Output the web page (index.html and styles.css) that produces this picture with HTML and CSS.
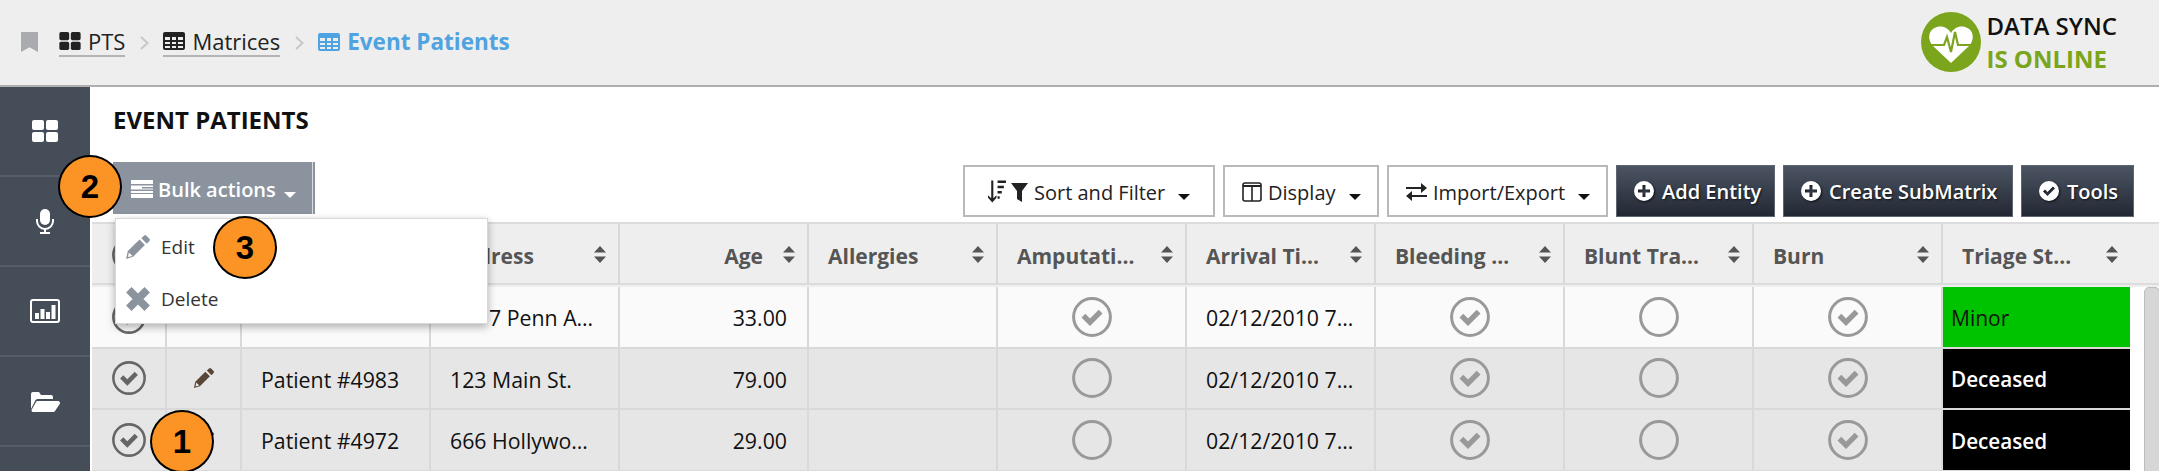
FILE: index.html
```html
<!DOCTYPE html>
<html lang="en">
<head>
<meta charset="utf-8">
<title>Event Patients</title>
<link rel="stylesheet" href="styles.css">
</head>
<body>
<svg class="defs" width="0" height="0" aria-hidden="true">
  <symbol id="i-grid" viewBox="0 0 26 22"><rect x="0" y="0" width="12" height="10" rx="2"/><rect x="14" y="0" width="12" height="10" rx="2"/><rect x="0" y="12" width="12" height="10" rx="2"/><rect x="14" y="12" width="12" height="10" rx="2"/></symbol>
  <symbol id="i-table" viewBox="0 0 22 18"><path fill-rule="evenodd" d="M2 0h18a2 2 0 0 1 2 2v14a2 2 0 0 1-2 2H2a2 2 0 0 1-2-2V2a2 2 0 0 1 2-2zM2 5v3h5V5zm7 0v3h4V5zm6 0v3h5V5zM2 10v2h5v-2zm7 0v2h4v-2zm6 0v2h5v-2zM2 14v2h5v-2zm7 0v2h4v-2zm6 0v2h5v-2z"/></symbol>
  <symbol id="i-pencil" viewBox="0 0 24 24"><path d="M17.500 1.500a1.600 1.600 0 0 1 2.200 0l2.800 2.800a1.600 1.600 0 0 1 0 2.200l-2.400 2.400-5-5zM13.400 5.100l5 5L7.500 21 1 23l1.500-7zM3.600 17l-.9 4.200 4.200-.9z"/></symbol>
  <symbol id="i-check" viewBox="0 0 40 40"><circle cx="20" cy="20" r="18.400" fill="none" stroke="currentColor" stroke-width="3"/><path d="M9.500 20.500l3.800-3.800 4.700 4.700 8.700-8.700 3.800 3.800L18 29z" fill="currentColor"/></symbol>
  <symbol id="i-empty" viewBox="0 0 40 40"><circle cx="20" cy="20" r="18.400" fill="none" stroke="currentColor" stroke-width="3"/></symbol>
  <symbol id="i-sort" viewBox="0 0 12 17"><path d="M6 0l6 6.500H0zM6 17l-6-6.500h12z"/></symbol>
  <symbol id="i-plus" viewBox="0 0 20 20"><path fill-rule="evenodd" d="M10 0a10 10 0 1 1 0 20 10 10 0 0 1 0-20zM8.500 4v4.500H4v3h4.500V16h3v-4.500H16v-3h-4.500V4z"/></symbol>
  <symbol id="i-ok" viewBox="0 0 20 20"><path fill-rule="evenodd" d="M10 0a10 10 0 1 1 0 20 10 10 0 0 1 0-20zM4 10.500l4.500 4.500L16 7.500 14 5.500l-5.500 5.500L6 8.500z"/></symbol>
</svg>

<header class="topbar">
  <nav class="crumbs">
    <svg class="bookmark" viewBox="0 0 18 21"><path d="M0 0h18v21l-9-5-9 5z"/></svg>
    <a class="crumb"><svg class="crumb-icon"><use href="#i-grid"/></svg>PTS</a>
    <svg class="chev" viewBox="0 0 9 14"><path d="M1 1l6.500 6L1 13" fill="none" stroke="currentColor" stroke-width="2"/></svg>
    <a class="crumb"><svg class="crumb-icon"><use href="#i-table"/></svg>Matrices</a>
    <svg class="chev" viewBox="0 0 9 14"><path d="M1 1l6.500 6L1 13" fill="none" stroke="currentColor" stroke-width="2"/></svg>
    <span class="crumb-now"><svg class="crumb-icon"><use href="#i-table"/></svg>Event Patients</span>
  </nav>
  <div class="sync">
    <svg class="sync-logo" viewBox="0 0 60 60">
      <circle cx="30" cy="30" r="30" fill="#7aa51c"/>
      <path d="M30 51L12 34C6 28 7 17 16 15c6-1.500 11 1 14 6 3-5 8-7.500 14-6 9 2 10 13 4 19z" fill="#fff"/>
      <path d="M8 33h15l3-8 4 15 4-20 3 13h15" fill="none" stroke="#7aa51c" stroke-width="2.200"/>
    </svg>
    <div class="sync-text"><div class="sync-a">DATA SYNC</div><div class="sync-b">IS ONLINE</div></div>
  </div>
</header>

<div class="body-row">
  <aside class="side">
    <div class="side-item"><svg class="si-grid"><use href="#i-grid"/></svg></div>
    <div class="side-item">
      <svg class="si-mic" viewBox="0 0 18 25"><rect x="4" y="0" width="10" height="16" rx="5"/><path d="M1 10v2a8 8 0 0 0 16 0v-2" fill="none" stroke="#fff" stroke-width="2"/><path d="M8 20h2v3h4v2H4v-2h4z"/></svg>
    </div>
    <div class="side-item">
      <svg class="si-chart" viewBox="0 0 30 24"><rect x="1" y="1" width="28" height="22" rx="2" fill="none" stroke="#fff" stroke-width="2"/><path d="M5 14h4v6H5zM10.500 10h4v10h-4zM16 13h4v7h-4zM21.500 6h4v14h-4z"/></svg>
    </div>
    <div class="side-item">
      <svg class="si-folder" viewBox="0 0 29 21"><path d="M0 18V3a2 2 0 0 1 2-2h6l2 3h10a2 2 0 0 1 2 2v2H7a3 3 0 0 0-3 2z"/><path d="M6 10h21a2 2 0 0 1 1.700 3L24 20a2 2 0 0 1-1.500 1H2a1.500 1.500 0 0 1-1.300-2.300L5 11a2 2 0 0 1 1-1z"/></svg>
    </div>
  </aside>

  <main class="content">
    <h1 class="title">EVENT PATIENTS</h1>
    <div class="toolbar">
      <button class="bulk"><svg class="bulk-icon" viewBox="0 0 22 18"><path d="M0 0h22v4H0zM0 5.500h22V7H11v1.500h11v1H0zM0 11h22v2H0zM0 14h22v4H0z"/></svg>Bulk actions<i class="caret"></i></button>
      <div class="actions">
        <button class="btn btn-sort">
          <svg class="ic-sort" viewBox="0 0 18 22"><path d="M4 0h2v17l3-3v2.500L5 21l-4-4.500V14l3 3z"/><path d="M10 0h8v2.500h-8zM10 5h6v2.500h-6zM10 10h4v2.500h-4zM10 15h2v2.500h-2z"/></svg>
          <svg class="ic-filter" viewBox="0 0 17 19"><path d="M0 0h17l-6 8v11l-5-3V8z"/></svg>
          Sort and Filter<i class="caret dark"></i></button>
        <button class="btn btn-disp">
          <svg class="ic-cols" viewBox="0 0 20 20"><rect x="1" y="1" width="18" height="18" rx="2" fill="none" stroke="#222" stroke-width="1.600"/><path d="M1 3h18v2H1zM9.200 3h1.600v16H9.200z"/></svg>
          Display<i class="caret dark"></i></button>
        <button class="btn btn-imp">
          <svg class="ic-swap" viewBox="0 0 21 18"><path d="M0 4h15V0l6 5-6 5V6H0z"/><path d="M21 12H6V8l-6 5 6 5v-4h15z"/></svg>
          Import/Export<i class="caret dark"></i></button>
        <button class="btn-dark btn-add"><svg class="dk-icon"><use href="#i-plus"/></svg>Add Entity</button>
        <button class="btn-dark btn-sub"><svg class="dk-icon"><use href="#i-plus"/></svg>Create SubMatrix</button>
        <button class="btn-dark btn-tools"><svg class="dk-icon"><use href="#i-ok"/></svg>Tools</button>
      </div>
    </div>

    <div class="grid">
      <div class="row head">
        <div class="cell"><svg class="chk-s"><use href="#i-check"/></svg></div>
        <div class="cell"></div>
        <div class="cell th"><span class="lab">Name</span><svg class="sort"><use href="#i-sort"/></svg></div>
        <div class="cell th"><span class="lab">Address</span><svg class="sort"><use href="#i-sort"/></svg></div>
        <div class="cell th"><span class="lab right">Age</span><svg class="sort"><use href="#i-sort"/></svg></div>
        <div class="cell th"><span class="lab">Allergies</span><svg class="sort"><use href="#i-sort"/></svg></div>
        <div class="cell th"><span class="lab">Amputati…</span><svg class="sort"><use href="#i-sort"/></svg></div>
        <div class="cell th"><span class="lab">Arrival Ti…</span><svg class="sort"><use href="#i-sort"/></svg></div>
        <div class="cell th"><span class="lab">Bleeding …</span><svg class="sort"><use href="#i-sort"/></svg></div>
        <div class="cell th"><span class="lab">Blunt Tra…</span><svg class="sort"><use href="#i-sort"/></svg></div>
        <div class="cell th"><span class="lab">Burn</span><svg class="sort"><use href="#i-sort"/></svg></div>
        <div class="cell th"><span class="lab">Triage St…</span><svg class="sort"><use href="#i-sort"/></svg></div>
      </div>

      <div class="row light">
        <div class="cell ctr"><svg class="chk-s"><use href="#i-check"/></svg></div>
        <div class="cell ctr"></div>
        <div class="cell td"></div>
        <div class="cell td td-covered">7 Penn A…</div>
        <div class="cell td num">33.00</div>
        <div class="cell td"></div>
        <div class="cell ctr"><svg class="chk"><use href="#i-check"/></svg></div>
        <div class="cell td">02/12/2010 7…</div>
        <div class="cell ctr"><svg class="chk"><use href="#i-check"/></svg></div>
        <div class="cell ctr"><svg class="chk"><use href="#i-empty"/></svg></div>
        <div class="cell ctr"><svg class="chk"><use href="#i-check"/></svg></div>
        <div class="cell status minor">Minor</div>
      </div>

      <div class="row">
        <div class="cell ctr"><svg class="chk-s"><use href="#i-check"/></svg></div>
        <div class="cell ctr"><svg class="pen"><use href="#i-pencil"/></svg></div>
        <div class="cell td">Patient #4983</div>
        <div class="cell td">123 Main St.</div>
        <div class="cell td num">79.00</div>
        <div class="cell td"></div>
        <div class="cell ctr"><svg class="chk"><use href="#i-empty"/></svg></div>
        <div class="cell td">02/12/2010 7…</div>
        <div class="cell ctr"><svg class="chk"><use href="#i-check"/></svg></div>
        <div class="cell ctr"><svg class="chk"><use href="#i-empty"/></svg></div>
        <div class="cell ctr"><svg class="chk"><use href="#i-check"/></svg></div>
        <div class="cell status dead">Deceased</div>
      </div>

      <div class="row">
        <div class="cell ctr"><svg class="chk-s"><use href="#i-check"/></svg></div>
        <div class="cell ctr"><svg class="pen"><use href="#i-pencil"/></svg></div>
        <div class="cell td">Patient #4972</div>
        <div class="cell td">666 Hollywo…</div>
        <div class="cell td num">29.00</div>
        <div class="cell td"></div>
        <div class="cell ctr"><svg class="chk"><use href="#i-empty"/></svg></div>
        <div class="cell td">02/12/2010 7…</div>
        <div class="cell ctr"><svg class="chk"><use href="#i-check"/></svg></div>
        <div class="cell ctr"><svg class="chk"><use href="#i-empty"/></svg></div>
        <div class="cell ctr"><svg class="chk"><use href="#i-check"/></svg></div>
        <div class="cell status dead">Deceased</div>
      </div>
      <div class="thumb"></div>
    </div>
  </main>
</div>

<div class="menu">
  <div class="menu-item"><svg class="menu-icon"><use href="#i-pencil"/></svg>Edit</div>
  <div class="menu-item"><svg class="menu-icon" viewBox="0 0 24 24"><path d="M6 1l6 6 6-6 5 5-6 6 6 6-5 5-6-6-6 6-5-5 6-6-6-6z"/></svg>Delete</div>
</div>

<div class="badge b1">1</div>
<div class="badge b2">2</div>
<div class="badge b3">3</div>
</body>
</html>
```

FILE: styles.css
```css
* { box-sizing: border-box; }
html, body { margin: 0; padding: 0; }
body {
  width: 2159px;
  height: 471px;
  overflow: hidden;
  position: relative;
  background: #fff;
  font-family: "Open Sans", "Noto Sans", sans-serif;
  color: #111;
}
.defs { position: absolute; }

/* top bar */
.topbar {
  height: 87px;
  background: #eeeeee;
  border-bottom: 2px solid #aeaeae;
  display: flex;
  justify-content: space-between;
  align-items: flex-start;
  padding: 0 25px 0 21px;
}
.crumbs {
  display: flex;
  align-items: flex-start;
  padding-top: 26px;
  font-size: 22px;
  line-height: 30px;
}
.bookmark { width: 17px; height: 20px; margin: 6px 21px 0 0; fill: #a9abae; }
.crumb {
  display: flex;
  align-items: center;
  color: #222;
  border-bottom: 2px solid #b4b4b4;
  height: 31px;
}
.crumb-icon { width: 22px; height: 18px; margin-right: 7px; fill: currentColor; }
.chev { width: 9px; height: 14px; margin: 10px 14px 0 15px; color: #c8c8c8; }
.crumb-now {
  display: flex;
  align-items: center;
  height: 31px;
  color: #4fa3e0;
  font-size: 22.500px;
  font-weight: 700;
}
.sync { display: flex; margin-top: 12px; margin-right: 17px; }
.sync-logo { width: 60px; height: 60px; margin-right: 5px; }
.sync-text { font-size: 24px; line-height: 33px; font-weight: 600; margin-top: -3px; }
.sync-a { color: #111; }
.sync-b { color: #7aa51c; font-weight: 700; }

/* body */
.body-row { display: flex; height: 384px; }
.side { width: 90px; background: #454d59; flex: none; display: flex; flex-direction: column; }
.side-item {
  height: 90px;
  flex: none;
  display: flex;
  align-items: center;
  justify-content: center;
  border-bottom: 2px solid #555d68;
  fill: #fff;
}
.si-grid { width: 26px; height: 22px; }
.si-mic { width: 18px; height: 25px; }
.si-chart { width: 30px; height: 24px; }
.si-folder { width: 29px; height: 21px; }

.content { flex: 1; min-width: 0; position: relative; }
.title {
  margin: 0;
  height: 75px;
  padding: 18px 0 0 23px;
  font-size: 24px;
  line-height: 30px;
  font-weight: 700;
  color: #111;
}

/* toolbar */
.toolbar { height: 60px; display: flex; justify-content: space-between; padding: 0 25px 0 23px; }
button { font: inherit; cursor: pointer; }
.bulk {
  width: 202px;
  height: 52px;
  display: flex;
  align-items: center;
  padding: 2px 0 0 18px;
  background: #8a939e;
  border: 0;
  box-shadow: inset -2px 0 0 #8a939e, inset -3px 0 0 #d9dde1;
  color: #fff;
  font-size: 20px;
  font-weight: 600;
}
.bulk-icon { width: 22px; height: 18px; margin-right: 5px; fill: #fff; }
.caret {
  display: inline-block;
  width: 0;
  height: 0;
  margin: 12px 0 0 8px;
  border-left: 6.500px solid transparent;
  border-right: 6.500px solid transparent;
  border-top: 6.500px solid #fff;
}
.caret.dark { border-top-color: #111; margin: 10px 0 0 13px; }
.actions { display: flex; gap: 8px; margin-top: 3px; height: 52px; }
.btn {
  height: 52px;
  display: flex;
  align-items: center;
  padding: 2px 0 0;
  background: #fff;
  border: 2px solid #b9b9b9;
  color: #222;
  font-size: 20px;
}
.btn svg { fill: #222; flex: none; }
.btn-sort { width: 252px; padding-left: 22px; }
.btn-disp { width: 156px; padding-left: 17px; }
.btn-imp { width: 221px; padding-left: 17px; }
.ic-sort { width: 19px; height: 24px; margin-right: 5px; }
.ic-filter { width: 17px; height: 19px; margin-right: 6px; }
.ic-cols { width: 20px; height: 20px; margin-right: 6px; }
.ic-swap { width: 21px; height: 18px; margin-right: 6px; }
.btn-dark {
  height: 52px;
  display: flex;
  align-items: center;
  padding: 0 0 0 17px;
  background: linear-gradient(#4c5463, #222833);
  border: 1px solid #5e6673;
  color: #fff;
  font-size: 20px;
  font-weight: 600;
  text-shadow: 1px 1px 2px rgba(0, 0, 0, .7);
}
.btn-add { width: 159px; }
.btn-sub { width: 230px; }
.btn-tools { width: 113px; }
.dk-icon { width: 20px; height: 20px; margin-right: 8px; fill: #fff; filter: drop-shadow(1px 1px 1px rgba(0, 0, 0, .7)); flex: none; }

/* table */
.grid { position: relative; margin-left: 2px; border-top: 2px solid #dcdcdc; }
.row {
  display: grid;
  grid-template-columns: 73px 75px repeat(10, 189px);
  grid-auto-rows: 59.500px;
  width: 2038px;
  background: #e6e6e6;
  border-bottom: 2px solid #d9d9d9;
}
.row.light { background: #fafafa; }
.row.head {
  grid-auto-rows: 61px;
  width: 2067px;
  height: 63px;
  background: #eeeeee;
  grid-template-columns: 73px 75px repeat(10, 189px) 29px;
  border-bottom-color: transparent;
  box-shadow: inset 0 -2px 0 #dcdcdc;
}
.cell { border-left: 2px solid #d9d9d9; display: flex; align-items: center; min-width: 0; white-space: nowrap; }
.cell:first-child { border-left: 0; justify-content: center; }
.ctr { justify-content: center; }
.td { font-size: 21.300px; padding: 2px 20px 0 19px; color: #111; }
.td-covered { padding-left: 58px; }
.num { justify-content: flex-end; }
.th { padding: 2px 12px 0 19px; font-size: 21px; font-weight: 700; color: #555; }
.lab { flex: 1; min-width: 0; }
.lab.right { text-align: right; }
.sort { width: 12px; height: 17px; margin: -2px 0 0 20px; fill: #555; flex: none; }
.chk-s { width: 34px; height: 34px; color: #666; }
.chk { width: 40px; height: 40px; color: #999; }
.pen { width: 22px; height: 22px; fill: #5a4636; }
.status { font-size: 21px; padding: 2px 0 0 8px; }
.minor { background: #00c300; color: #111; }
.dead { background: #000; color: #fff; font-size: 20.700px; font-weight: 600; }
.thumb {
  position: absolute;
  left: 2052px;
  top: 63px;
  width: 16px;
  height: 200px;
  background: #d6d6d6;
  border: 1px solid #bdbdbd;
  border-radius: 5px 5px 0 0;
}

/* dropdown */
.menu {
  position: absolute;
  left: 115px;
  top: 218px;
  width: 373px;
  height: 106px;
  background: #fff;
  border: 1px solid #d8d8d8;
  box-shadow: 0 3px 8px rgba(0, 0, 0, .3);
  padding-top: 2px;
}
.menu-item {
  height: 52px;
  display: flex;
  align-items: center;
  padding-left: 9px;
  font-size: 19px;
  color: #333;
}
.menu-icon { width: 26px; height: 26px; margin-right: 10px; fill: #8a939e; }

/* annotation callouts */
.badge {
  position: absolute;
  width: 64px;
  height: 63px;
  border-radius: 50%;
  background: #fb9424;
  border: 2px solid #000;
  display: flex;
  align-items: center;
  justify-content: center;
  font-family: "Liberation Sans", Arial, sans-serif;
  font-size: 33px;
  font-weight: 700;
  color: #000;
}
.b1 { left: 150px; top: 410px; }
.b2 { left: 58px; top: 155px; }
.b3 { left: 213px; top: 216px; }
```
